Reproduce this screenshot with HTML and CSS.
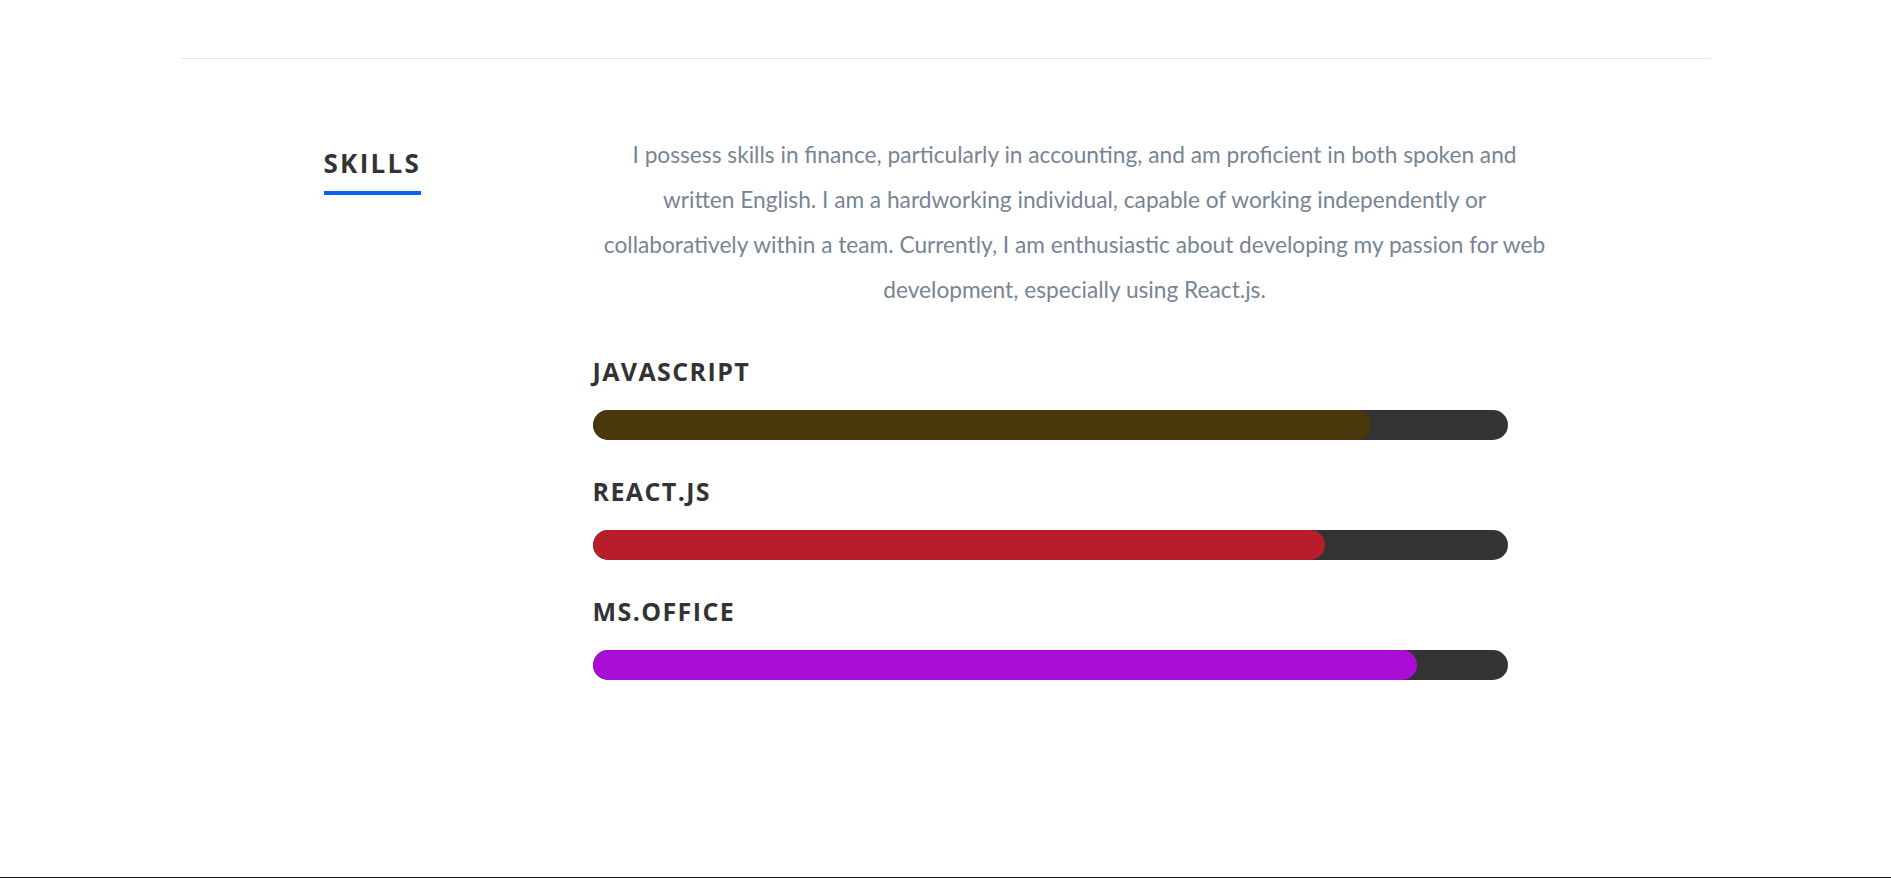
FILE: index.html
```html
<!DOCTYPE html>
<html lang="en">
<head>
<meta charset="utf-8">
<title>Skills</title>
<link rel="stylesheet" href="styles.css">
</head>
<body>
<div class="container">
  <div class="divider"></div>
  <section class="skills">
    <div class="skills-title">
      <h2>Skills</h2>
    </div>
    <div class="skills-body">
      <p class="intro">I possess skills in finance, particularly in accounting, and am proficient in both spoken and written English. I am a hardworking individual, capable of working independently or collaboratively within a team. Currently, I am enthusiastic about developing my passion for web development, especially using React.js.</p>
      <ul class="skill-list">
        <li class="skill">
          <h3 class="skill-name">Javascript</h3>
          <div class="track"><div class="fill fill-js" style="width:85%"></div></div>
        </li>
        <li class="skill">
          <h3 class="skill-name">React.js</h3>
          <div class="track"><div class="fill fill-react" style="width:80%"></div></div>
        </li>
        <li class="skill">
          <h3 class="skill-name">MS.Office</h3>
          <div class="track"><div class="fill fill-office" style="width:90%"></div></div>
        </li>
      </ul>
    </div>
  </section>
</div>
<footer class="footer"></footer>
</body>
</html>
```

FILE: styles.css
```css
* { box-sizing: border-box; }
html, body { margin: 0; padding: 0; background: #fff; }
body { font-family: "Open Sans", "Noto Sans", sans-serif; color: #333; }

.container { width: 1530px; margin: 0 auto; }
.divider { height: 1px; background: #e6e6e6; margin-top: 58px; }

.skills {
  display: grid;
  grid-template-columns: 269px 964px;
  padding-left: 143px;
  height: 818px;
}

.skills-title h2 {
  display: inline-block;
  margin: 86px 0 0;
  font-size: 26px;
  font-weight: 700;
  letter-spacing: 2.3px;
  text-transform: uppercase;
  color: #333;
  padding-bottom: 10px;
  border-bottom: 4px solid #0563fa;
  line-height: normal;
}

.intro {
  margin: 73px 8px 0;
  text-align: center;
  font-family: "Lato", sans-serif;
  font-size: 22.7px;
  line-height: 45px;
  color: #758595;
}

.skill-list { list-style: none; margin: 42px 0 0; padding: 0; }
.skill { margin-bottom: 34px; }
.skill-name {
  margin: 0 0 22px;
  font-size: 25px;
  line-height: 34px;
  font-weight: 700;
  letter-spacing: 1.4px;
  text-transform: uppercase;
  color: #333;
}
.track { width: 95%; height: 30px; border-radius: 15px; background: #333; overflow: hidden; }
.fill { height: 100%; border-radius: 15px; }
.fill-js { background: #48380b; }
.fill-react { background: #b81e2a; }
.fill-office { background: #aa0ed6; }

.footer { height: 100px; background: #111; }
```
